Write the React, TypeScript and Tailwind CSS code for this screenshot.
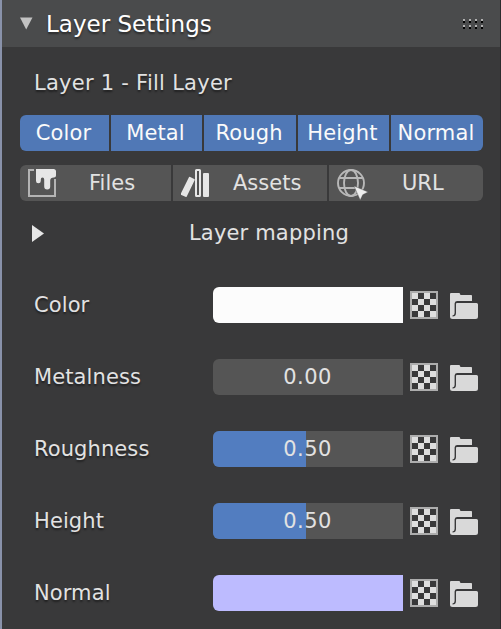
import React from "react";

const shadow = "[text-shadow:0_2px_2px_rgba(0,0,0,0.45)]";

function Checker() {
  return (
    <svg width="28" height="28" viewBox="0 0 28 28" shapeRendering="crispEdges">
      <rect width="28" height="28" fill="#adadad" />
      <rect x="2" y="2" width="24" height="24" fill="#dedede" />
      <path
        d="M8 2h6v6h-6zM20 2h6v6h-6zM2 8h6v6h-6zM14 8h6v6h-6zM8 14h6v6h-6zM20 14h6v6h-6zM2 20h6v6h-6zM14 20h6v6h-6z"
        fill="#39393a"
      />
    </svg>
  );
}

function Folder() {
  return (
    <svg width="28" height="28" viewBox="0 0 28 28">
      <path
        d="M1 2H9.500L10.500 4H21.200Q22 4 22 4.800V10H7Q4.600 10 4.600 12.500V22Q4.600 24 2.500 24.500V25.500Q6 25.500 6 22V12.800Q6 12 7 12H26.500Q28 12 28 13.500V25.500Q28 28 25.500 28H2.500Q0 28 0 25.500V3Q0 2 1 2Z"
        fill="#d9d9d9"
      />
    </svg>
  );
}

function FilesIcon() {
  return (
    <svg width="28" height="28" viewBox="0 0 28 28">
      <path d="M6 1H1V27H27V10" fill="none" stroke="#b4b4b4" strokeWidth="2" />
      <path
        d="M8 0H25.500Q28 0 28 2.500V6.500Q28 8.500 26 8.500Q22.200 8.500 22.200 11.500V17.500Q22.200 20.500 19.200 20.500Q16.200 20.500 16.200 17.500V10.500Q16.200 8.500 14.500 8.500Q12.800 8.500 12.800 10.500V12Q12.800 14.200 10.400 14.200Q8 14.200 8 12Z"
        fill="#e6e6e6"
      />
    </svg>
  );
}

function AssetsIcon() {
  return (
    <svg width="29" height="28" viewBox="0 0 29 28">
      <rect x="3.500" y="8" width="6.500" height="20" rx="1" transform="rotate(26 7 18)" fill="#e6e6e6" />
      <rect x="15" y="1" width="4" height="26" rx="0.500" fill="#505050" stroke="#e6e6e6" strokeWidth="2" />
      <rect x="22" y="4" width="6" height="24" rx="1" fill="#e6e6e6" />
    </svg>
  );
}

function UrlIcon() {
  return (
    <svg width="28" height="28" viewBox="0 0 28 28" className="overflow-visible">
      <g fill="none" stroke="#b8b8b8" strokeWidth="1.900">
        <circle cx="14" cy="14" r="13" />
        <ellipse cx="14" cy="14" rx="7" ry="13" />
        <path d="M2.500 9H25.500M2 19H18" />
      </g>
      <path d="M17 17L31 23L25.700 25.800L23.200 31Z" fill="#eeeeee" stroke="#555555" strokeWidth="0.400" />
    </svg>
  );
}

function Grip() {
  return (
    <div className="grid grid-cols-4 gap-x-1 gap-y-[2px]">
      {Array.from({ length: 8 }, (_, i) => (
        <div key={i} className="h-1 w-[2px] border-t-2 border-[#b0b0b0] bg-black" />
      ))}
    </div>
  );
}

const tabs = [
  { label: "Color", width: "w-[89px]" },
  { label: "Metal", width: "w-[91px]" },
  { label: "Rough", width: "w-[92px]" },
  { label: "Height", width: "w-[91px]" },
  { label: "Normal", width: "w-[92px]" },
];

const sources = [
  { label: "Files", width: "w-[151px]", text: "pl-[33px]", icon: <FilesIcon /> },
  { label: "Assets", width: "w-[154px]", text: "pl-[23px]", icon: <AssetsIcon /> },
  { label: "URL", width: "w-[154px]", text: "pl-[37px]", icon: <UrlIcon /> },
];

const channels = [
  { label: "Color", fill: "bg-[#fcfcfc]" },
  { label: "Metalness", fill: "bg-[#555555]", value: "0.00", amount: 0 },
  { label: "Roughness", fill: "bg-[#555555]", value: "0.50", amount: 93 },
  { label: "Height", fill: "bg-[#555555]", value: "0.50", amount: 93 },
  { label: "Normal", fill: "bg-[#bdbbff]" },
];

export default function App() {
  return (
    <div className="flex h-[629px] w-[501px] overflow-hidden bg-[#39393a] font-['DejaVu_Sans',sans-serif] text-[21px] leading-9 text-[#e2e2e2]">
      <div className="w-[2px] bg-[#8992aa]" />
      <div className="flex w-[498px] flex-col">
        <header className="flex h-[47px] items-center bg-[#4a4b4c] pl-[18px] pr-[17px]">
          <svg width="13" height="13" viewBox="0 0 13 13">
            <path d="M0 0.500H12.500L6.200 12.500Z" fill="#c2c2c2" />
          </svg>
          <h1 className={`grow pl-[13px] text-[23px] text-white ${shadow}`}>Layer Settings</h1>
          <Grip />
        </header>
        <div className={`mt-[18px] h-9 pl-8 tracking-[0.26px] ${shadow}`}>Layer 1 - Fill Layer</div>
        <div className="ml-[18px] mt-[14px] flex h-9 w-[463px] gap-[2px] overflow-hidden rounded-md text-[#fafafa]">
          {tabs.map((t) => (
            <button key={t.label} className={`${t.width} bg-[#5078b6] pr-[2px] text-center tracking-[0.15px]`}>
              {t.label}
            </button>
          ))}
        </div>
        <div className="ml-[18px] mt-[14px] flex h-9 w-[463px] gap-[2px] overflow-hidden rounded-md">
          {sources.map((s) => (
            <button key={s.label} className={`flex ${s.width} items-center bg-[#555555] pl-2`}>
              {s.icon}
              <span className={s.text}>{s.label}</span>
            </button>
          ))}
        </div>
        <div className="mt-[14px] flex h-9 items-center pl-[30px]">
          <svg width="12" height="17" viewBox="0 0 12 17">
            <path d="M0 0V17L12 8.500Z" fill="#e6e6e6" />
          </svg>
          <span className="pl-[145px] tracking-[0.17px]">Layer mapping</span>
        </div>
        <div className="mt-9 flex flex-col gap-9">
          {channels.map((c) => (
            <div key={c.label} className="flex h-9 items-center pl-8">
              <div className={`w-[179px] tracking-[0.1px] ${shadow}`}>{c.label}</div>
              <div className={`grid h-9 w-[190px] overflow-hidden rounded-l-md ${c.fill}`}>
                <div
                  className="col-start-1 row-start-1 h-9 bg-[#527dc0]"
                  style={{ width: c.amount ?? 0 }}
                />
                <span className="col-start-1 row-start-1 pr-px text-center tracking-[0.4px]">{c.value}</span>
              </div>
              <div className="flex gap-3 pl-[7px]">
                <Checker />
                <Folder />
              </div>
            </div>
          ))}
        </div>
      </div>
      <div className="w-px bg-[#2c2c2d]" />
    </div>
  );
}
